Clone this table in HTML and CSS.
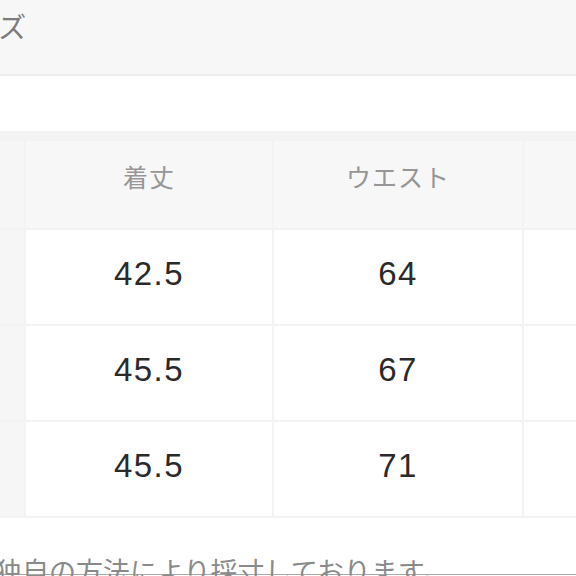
FILE: index.html
```html
<!DOCTYPE html>
<html lang="ja">
<head>
<meta charset="utf-8">
<link rel="stylesheet" href="styles.css">
</head>
<body>
<div class="topbar"><h2 class="title">サイズ</h2></div>
<div class="spacer"></div>
<div class="table">
  <div class="cell side"></div>
  <div class="cell head">着丈</div>
  <div class="cell head">ウエスト</div>
  <div class="cell head"></div>

  <div class="cell side"></div>
  <div class="cell data">42.5</div>
  <div class="cell data">64</div>
  <div class="cell data"></div>

  <div class="cell side"></div>
  <div class="cell data">45.5</div>
  <div class="cell data">67</div>
  <div class="cell data"></div>

  <div class="cell side"></div>
  <div class="cell data">45.5</div>
  <div class="cell data">71</div>
  <div class="cell data"></div>
</div>
<div class="note"><p class="note-text">独自の方法により採寸しております。</p></div>
<div class="rule"></div>
</body>
</html>
```

FILE: styles.css
```css
html, body {
  margin: 0;
  padding: 0;
  background: #ffffff;
  overflow: hidden;
}
body {
  width: 576px;
  height: 576px;
  font-family: "Noto Sans CJK JP", "Liberation Sans", sans-serif;
}
.topbar {
  height: 74px;
  background: #f7f7f7;
  border-bottom: 2px solid #ececec;
  overflow: hidden;
}
.title {
  margin: 0 0 0 -57px;
  padding-top: 8px;
  font-size: 28px;
  line-height: 36px;
  font-weight: 400;
  color: #7c7c7c;
  white-space: nowrap;
}
.spacer {
  height: 55px;
}
.table {
  display: grid;
  grid-template-columns: 24px 246px 248px 1fr;
  grid-template-rows: 87px 94px 94px 94px;
  gap: 2px;
  padding: 10px 0 2px 0;
  background: #f3f3f3;
}
.cell {
  display: flex;
  align-items: center;
  justify-content: center;
}
.side {
  background: #f6f6f6;
}
.head {
  background: #f7f7f7;
  color: #969696;
  font-size: 25px;
  font-weight: 400;
  letter-spacing: 1px;
  padding-bottom: 18px;
}
.data {
  background: #ffffff;
  color: #2a2a2a;
  font-family: "Liberation Sans", "Noto Sans CJK JP", sans-serif;
  font-size: 33px;
  letter-spacing: 1.5px;
  padding-bottom: 6px;
}
.note {
  height: 56px;
}
.note-text {
  margin: 0 0 0 -5px;
  padding-top: 38px;
  font-size: 27px;
  line-height: 30px;
  color: #8a8a8a;
  white-space: nowrap;
}
.rule {
  height: 1px;
  background: #a8a8a8;
}
```
